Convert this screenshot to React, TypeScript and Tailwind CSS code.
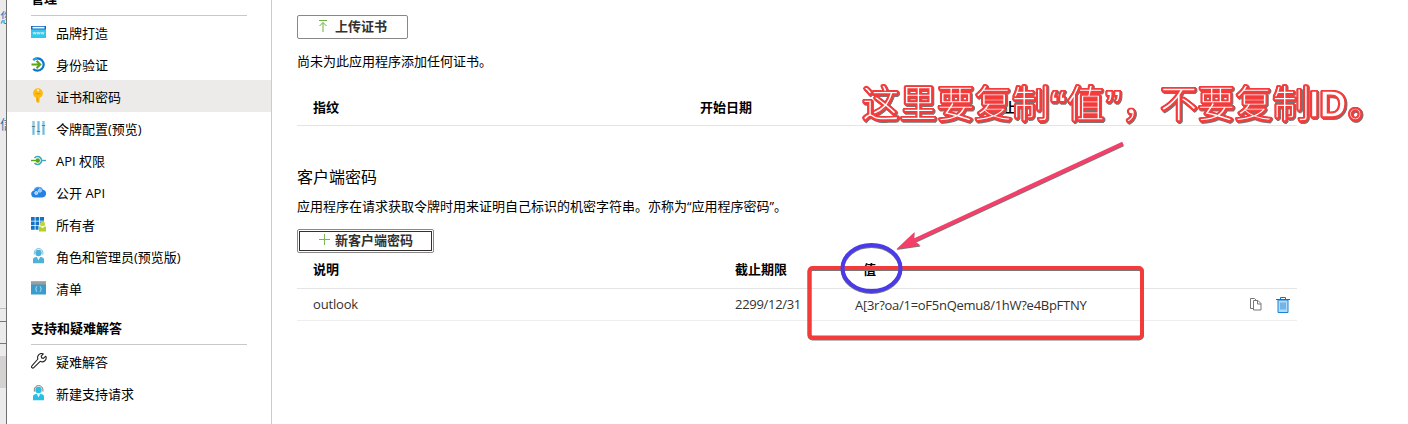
import React from "react";

const cjk = "font-['Open_Sans','Noto_Sans_CJK_SC',sans-serif]";

function Www() {
  return (
    <svg width="15" height="15" viewBox="0 0 15 15">
      <rect x="0" y="1" width="15" height="12" rx="0.6" fill="#32c8ee" />
      <rect x="0" y="1" width="15" height="3.4" fill="#0b66c3" />
      <rect x="1.500" y="1.800" width="12" height="1.700" fill="#fff" />
      <path d="M2 7l.8 2.3.9-2.3.8 2.3L5.300 7M6 7l.7 2.300.8-2.3.8 2.3L9.100 7M9.900 7l.7 2.300.8-2.300.8 2.300.8-2.300" fill="none" stroke="#c9f4fc" strokeWidth="0.8" />
    </svg>
  );
}
function Auth() {
  return (
    <svg width="15" height="15" viewBox="0 0 15 15">
      <path d="M2.200 3A6.200 6.200 0 1 1 2.200 12" fill="none" stroke="#0a74cf" strokeWidth="2.200" />
      <path d="M2.500 3A6.200 6.200 0 0 1 6 1.300" fill="none" stroke="#2aa0dc" strokeWidth="2.200" />
      <path d="M.5 7.500h8.500M5.500 3.800l3.700 3.700-3.700 3.700" fill="none" stroke="#5ba613" strokeWidth="2.100" />
    </svg>
  );
}
function Key() {
  return (
    <svg width="15" height="16" viewBox="0 0 15 16">
      <circle cx="7" cy="5.200" r="4.900" fill="#fdba12" />
      <path d="M5 8h4v1.500L8.300 10.500 9 11.300 8.200 12.200 9 13.200 7 15.300 5.300 13.500z" fill="#fdba12" />
      <circle cx="7" cy="2.300" r="1.100" fill="#fff4cf" />
      <path d="M4.500 5.800h5M6.200 9.500v4" stroke="#e89400" strokeWidth="0.900" />
    </svg>
  );
}
function Sliders() {
  return (
    <svg width="15" height="16" viewBox="0 0 15 16">
      <path d="M2.500 1v14M7.500 1v14M12.500 1v14" stroke="#8cc8e2" strokeWidth="2.400" />
      <path d="M.8 6.500h3.400M5.800 11.500h3.400M10.800 5.500h3.400" stroke="#6b7980" strokeWidth="1.200" />
      <path d="M2.500 7v7M7.500 2v9M12.500 6v8" stroke="#6fbcd9" strokeWidth="1.200" />
    </svg>
  );
}
function ApiPerm() {
  return (
    <svg width="15" height="15" viewBox="0 0 15 15">
      <path d="M3.500 4.900A4 4 0 1 1 3.500 10.100" fill="none" stroke="#38a8c4" strokeWidth="1.500" />
      <path d="M11 7.500h4" stroke="#38a8c4" strokeWidth="1.400" />
      <path d="M0 7.500h6" stroke="#5ba613" strokeWidth="1.400" />
      <circle cx="6.800" cy="7.500" r="2.200" fill="#5ba613" />
    </svg>
  );
}
function Cloud() {
  return (
    <svg width="16" height="15" viewBox="0 0 16 15">
      <path d="M3.600 12.500A3.600 3.600 0 0 1 3 5.400 4.900 4.900 0 0 1 12 4.800 3.900 3.900 0 0 1 11.500 12.500z" fill="#2382e3" />
      <path d="M3 5.600A4.800 4.800 0 0 1 11.500 4.500" fill="none" stroke="#56a8f3" strokeWidth="1.200" />
      <circle cx="5.300" cy="8" r="1.500" fill="#8fc3f7" stroke="#d9ebff" strokeWidth="1" />
      <circle cx="8.800" cy="5.600" r="1.700" fill="#8fc3f7" stroke="#d9ebff" strokeWidth="1" strokeDasharray="1.200 .4" />
    </svg>
  );
}
function Owners() {
  return (
    <svg width="15" height="16" viewBox="0 0 15 16">
      <path d="M0 1h3.700v3.700H0zM4.500 1h3.700v3.700H4.500zM9 1h4v3.700H9zM0 5.500h3.700v3.700H0zM4.500 5.500h3.700v3.700H4.500zM9 5.500h4v1.800H9zM0 10h3.700v3.700H0zM4.500 10h3v3.700h-3z" fill="#1473c8" />
      <circle cx="11.500" cy="8" r="2.500" fill="#c1d62f" />
      <path d="M8 10.500h1.500l2 1.700 2-1.700H15v5H8z" fill="#b5cf22" />
      <path d="M10.300 10.500h2.400l-1.200 1.500z" fill="#fff" />
    </svg>
  );
}
function Agent({ color, ring }: { color: string; ring: string }) {
  return (
    <svg width="15" height="16" viewBox="0 0 15 16">
      <path d="M3.300 6.500V4.800a4.300 4.200 0 0 1 8.600 0V6.500" fill="none" stroke={ring} strokeWidth="1" />
      <circle cx="7.500" cy="5" r="3.200" fill={color} />
      <path d="M2 15.300V11.500Q2 9.500 4 9.200l2-.2 1.500 3 1.500-3 2 .2q2 .3 2 2.300V15.300z" fill={color} />
      <path d="M6.300 9.500h2.400L7.500 12.500z" fill="#e9f8fd" />
    </svg>
  );
}
function Manifest() {
  return (
    <svg width="15" height="14" viewBox="0 0 15 14">
      <rect width="15" height="13" y=".5" fill="#3b9bcb" />
      <rect width="15" height="3" y=".5" fill="#9e9e9e" />
      <path d="M6.200 5.500q-1 0-1 1v.7l-.7.800.7.800v.7q0 1 1 1M8.800 5.500q1 0 1 1v.7l.7.800-.7.800v.7q0 1-1 1" fill="none" stroke="#d9effa" strokeWidth=".8" />
    </svg>
  );
}
function Wrench() {
  return (
    <svg width="16" height="16" viewBox="0 0 16 16">
      <path d="M12.300.9A4 4 0 0 0 6.900 6L.9 12.800a1.300 1.300 0 0 0 1.900 1.900L9.200 8.300A4 4 0 0 0 14.800 3.200L12.300 5.400 10.600 4.900 10.200 3.200z" fill="none" stroke="#222" strokeWidth="1.100" strokeLinejoin="round" />
    </svg>
  );
}

const manage: [string, React.ReactNode][] = [
  ["品牌打造", <Www />],
  ["身份验证", <Auth />],
  ["证书和密码", <Key />],
  ["令牌配置(预览)", <Sliders />],
  ["API 权限", <ApiPerm />],
  ["公开 API", <Cloud />],
  ["所有者", <Owners />],
  ["角色和管理员(预览版)", <Agent color="#4fb1d8" ring="#68bddf" />],
  ["清单", <Manifest />],
];
const support: [string, React.ReactNode][] = [
  ["疑难解答", <Wrench />],
  ["新建支持请求", <Agent color="#26bfe6" ring="#777777" />],
];

function NavItem({ label, icon, active }: { label: string; icon: React.ReactNode; active?: boolean }) {
  return (
    <div className={`flex h-8 items-center pl-6 ${active ? "bg-[#edebe9]" : ""}`}>
      <span className="flex w-[25px] shrink-0 items-center">{icon}</span>
      <span className="whitespace-nowrap pt-px leading-8">{label}</span>
    </div>
  );
}

function Backdrop() {
  return (
    <div className="flex h-full w-[7px] shrink-0 flex-col overflow-hidden border-r border-[#707070] bg-[#ebebeb]">
      <div className="h-[9px] shrink-0" />
      <div className="flex h-4 w-full shrink-0 justify-start text-[13px] leading-4 text-[#2484c6]"><span>您</span></div>
      <div className="h-[91px] shrink-0" />
      <div className="flex h-4 w-full shrink-0 justify-start text-[13px] leading-4 text-[#2378a8]"><span>信</span></div>
      <div className="h-[177px] shrink-0 border-b border-[#bdbdbd]" />
      <div className="h-[13px] shrink-0 border-b border-[#777777]" />
      <div className="h-[22px] shrink-0 border-b border-[#777777]" />
      <div className="h-3 shrink-0" />
      <div className="h-8 shrink-0 bg-[#d4d2d0]" />
    </div>
  );
}

function Sidebar() {
  return (
    <nav className="flex w-[265px] shrink-0 flex-col border-r border-[#cccccc]">
      <div className="ml-6 mr-6 h-4 border-b border-[#c8c8c8]">
        <div className="-mt-[11px] h-[18px] font-bold leading-[18px]">管理</div>
      </div>
      {manage.map(([label, icon], i) => (
        <NavItem key={label} label={label} icon={icon} active={i === 2} />
      ))}
      <div className="mx-6 flex h-[41px] items-end border-b border-[#c8c8c8] pb-[6px]">
        <span className="font-bold leading-5">支持和疑难解答</span>
      </div>
      {support.map(([label, icon]) => (
        <NavItem key={label} label={label} icon={icon} />
      ))}
    </nav>
  );
}

function Content() {
  return (
    <main className="flex w-[1025px] shrink-0 flex-col pl-[25px] pt-[15px]">
      <button className="flex h-6 w-[111px] items-center justify-center gap-[7px] rounded-[2px] border border-[#8a8886] pb-0.5 font-semibold leading-5 text-[#323130]">
        <svg width="10" height="13" viewBox="0 0 10 13">
          <path d="M1 .5h8M5 12V2.700M1.500 6L5 2.500 8.500 6" fill="none" stroke="#6cb33f" strokeWidth="1" />
        </svg>
        上传证书
      </button>
      <p className="mt-3 h-5 leading-5">尚未为此应用程序添加任何证书。</p>
      <div className="mt-[18px] flex h-[37px] border-b border-[#e5e5e5] pl-4 pt-[8px] font-bold leading-5">
        <span className="w-[387px]">指纹</span>
        <span className="w-[290px]">开始日期</span>
        <span>截止</span>
      </div>
      <h2 className="mt-[39px] h-6 text-base leading-6">客户端密码</h2>
      <p className="mt-[7px] h-5 whitespace-nowrap leading-5">
        应用程序在请求获取令牌时用来证明自己标识的机密字符串。亦称为“应用程序密码”。
      </p>
      <button className="mt-[13px] flex h-6 w-[137px] rounded-[2px] border border-[#8a8886] p-px">
        <span className="flex h-full w-full items-center justify-center gap-1 border border-[#323130] pb-[3px] font-semibold leading-[18px] text-[#323130]">
          <svg width="13" height="13" viewBox="0 0 13 13">
            <path d="M6.500 1v11M1 6.500h11" stroke="#7ab851" fill="none" />
          </svg>
          新客户端密码
        </span>
      </button>
      <div className="flex h-9 border-b border-[#e5e5e5] pl-4 pt-[6px] font-bold leading-5">
        <span className="w-[422px]">说明</span>
        <span className="w-[128px]">截止期限</span>
        <span>值</span>
      </div>
      <div className="flex h-8 border-b border-[#eeeeee] pl-4 pt-[5px] leading-5 text-[#323130]">
        <span className="w-[422px] tracking-[-0.170px]">outlook</span>
        <span className="w-[120px] tracking-[-0.300px]">2299/12/31</span>
        <span className="w-[395px] pt-px tracking-[-0.270px]">A[3r?oa/1=oF5nQemu8/1hW?e4BpFTNY</span>
        <svg width="12" height="14" viewBox="0 0 12 14" className="mt-1">
          <path d="M3.500 10.500H.5V.5H4.500l1.500 1.500M3.500 2.500h4.500l3 3v6.500H3.500zM7.500 2.500v3.500H11" fill="none" stroke="#777" />
        </svg>
        <svg width="14" height="16" viewBox="0 0 14 16" className="ml-[14px] mt-[3px]">
          <path d="M2 3h10v12.500H2z" fill="#b7daf4" stroke="#1684d8" />
          <path d="M0 2.500h14M4.500 2V.500h5V2" fill="none" stroke="#0078d4" />
          <path d="M4 5.500h6v7H4z" fill="#73b5e8" />
        </svg>
      </div>
    </main>
  );
}

function Annotations() {
  return (
    <>
      <div className="absolute left-[862px] top-[78px] flex h-[52px] items-center whitespace-nowrap font-['Liberation_Sans','Noto_Sans_CJK_SC',sans-serif] text-[37.500px] font-normal leading-[52px] text-white [-webkit-text-stroke:1.300px_#f43b3b] [text-shadow:1.500px_0_#f43b3b,-1.500px_0_#f43b3b,0_1.500px_#f43b3b,0_-1.500px_#f43b3b,1.100px_1.100px_#f43b3b,-1.100px_1.100px_#f43b3b,1.100px_-1.100px_#f43b3b,-1.100px_-1.100px_#f43b3b] [filter:drop-shadow(1px_1px_0.500px_#777777)]">
        <span className="w-[187px]">这里要复制</span>
        <span className="w-[18px] font-bold">“</span>
        <span className="w-[37px]">值</span>
        <span className="w-[18px] font-bold">”</span>
        <span className="w-[38px]">，</span>
        <span className="w-[149px]">不要复制</span>
        <span className="w-[39px] font-bold">ID</span>
        <span>。</span>
      </div>
      <svg width="1408" height="424" viewBox="0 0 1408 424" className="pointer-events-none absolute left-0 top-0 [filter:drop-shadow(0.500px_1px_0.500px_#777777)]">
        <rect x="809.500" y="268" width="332.500" height="69.500" rx="3" fill="none" stroke="#f43b3b" strokeWidth="4" />
        <ellipse cx="871.500" cy="268" rx="29" ry="23" fill="none" stroke="#493bea" strokeWidth="4" />
        <path d="M1123 143.500L914 240.500" stroke="#f43f6b" strokeWidth="4" />
        <path d="M896.500 249L914.500 232L914 240.500L920.500 245.500z" fill="#f43f6b" />
      </svg>
    </>
  );
}

export default function App() {
  return (
    <div className={`relative flex h-[424px] w-[1408px] overflow-hidden bg-white text-[13px] text-black ${cjk}`}>
      <Backdrop />
      <Sidebar />
      <Content />
      <Annotations />
    </div>
  );
}
